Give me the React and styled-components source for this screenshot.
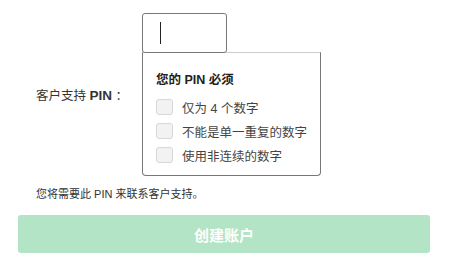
import React from 'react'
import styled, { createGlobalStyle } from 'styled-components'

const Global = createGlobalStyle`
  body {
    margin: 0;
    background: #fff;
    font-family: "Liberation Sans", "Noto Sans CJK SC", sans-serif;
    color: #333;
  }
`

const Page = styled.div`
  padding: 13px 20px 0 18px;
  display: flex;
  flex-direction: column;
`

const Row = styled.div`
  display: flex;
  align-items: center;
  padding-left: 18px;
`

const Label = styled.label`
  width: 106px;
  font-size: 12.5px;
  color: #333;
  white-space: nowrap;
  b {
    font-weight: bold;
    font-size: 13.5px;
  }
`

const Field = styled.div`
  display: flex;
  flex-direction: column;
  align-items: flex-start;
`

const Input = styled.div`
  width: 85px;
  height: 40px;
  border: 1px solid #777;
  border-radius: 3px;
  display: flex;
  align-items: center;
  padding-left: 17px;
  box-sizing: border-box;
  position: relative;
  z-index: 1;
  background: #fff;
`

const Caret = styled.span`
  width: 1px;
  height: 22px;
  background: #222;
`

const Popup = styled.div`
  width: 179px;
  margin-top: -1px;
  border: 1px solid #777;
  border-top-color: #ccc;
  border-radius: 0 0 4px 4px;
  box-sizing: border-box;
  padding: 16px 12px 8px 13px;
`

const Heading = styled.div`
  font-weight: bold;
  font-size: 12.5px;
  color: #222;
  margin-bottom: 7px;
  white-space: nowrap;
`

const Item = styled.div`
  display: flex;
  align-items: center;
  gap: 9px;
  height: 24px;
  font-size: 12.5px;
  color: #444;
  white-space: nowrap;
`

const Box = styled.span`
  flex-shrink: 0;
  width: 17px;
  height: 16px;
  box-sizing: border-box;
  border: 1px solid #d8d8d8;
  border-radius: 3px;
  background: #f2f2f2;
`

const Note = styled.p`
  margin: 9px 0 0 18px;
  font-size: 11px;
  color: #333;
`

const Button = styled.button`
  margin-top: 14px;
  height: 38px;
  width: 412px;
  border: none;
  border-radius: 3px;
  background: #b2e4c5;
  color: #fff;
  font-family: inherit;
  font-weight: bold;
  font-size: 15px;
`

const rules = ['仅为 4 个数字', '不能是单一重复的数字', '使用非连续的数字']

export default function App() {
  return (
    <>
      <Global />
      <Page>
        <Row>
          <Label>客户支持 <b>PIN</b> ：</Label>
          <Field>
            <Input><Caret /></Input>
            <Popup>
              <Heading>您的 PIN 必须</Heading>
              {rules.map(r => (
                <Item key={r}><Box />{r}</Item>
              ))}
            </Popup>
          </Field>
        </Row>
        <Note>您将需要此 PIN 来联系客户支持。</Note>
        <Button>创建账户</Button>
      </Page>
    </>
  )
}
